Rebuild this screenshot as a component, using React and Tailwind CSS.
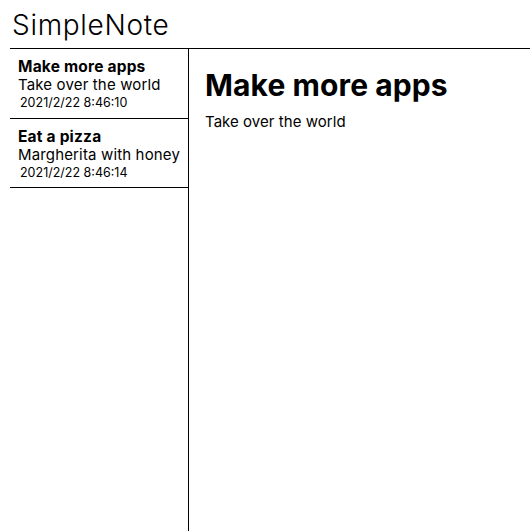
export default function App() {
  const notes = [
    { title: "Make more apps", body: "Take over the world", date: "2021/2/22 8:46:10", h: "h-[70px]" },
    { title: "Eat a pizza", body: "Margherita with honey", date: "2021/2/22 8:46:14", h: "h-[69px]" },
  ];
  return (
    <div className="h-[531px] flex flex-col pl-[10px] text-black bg-white" style={{ fontFamily: "Inter, sans-serif" }}>
      <div className="h-[49px] border-b border-black flex items-center pl-[2px] pt-[2px]">
        <span className="text-[28px] font-light tracking-[0.7px] leading-none">SimpleNote</span>
      </div>
      <div className="flex flex-1 min-h-0">
        <div className="w-[179px] border-r border-black flex flex-col">
          {notes.map((n) => (
            <div key={n.title} className={`border-b border-black pl-[8px] pt-[9px] ${n.h}`}>
              <div className="text-[15.5px] font-bold leading-[18px] tracking-[0.2px]">{n.title}</div>
              <div className="text-[15px] leading-[18px] tracking-[0.15px]">{n.body}</div>
              <div className="text-[12.5px] leading-[18px] pl-[2px]">{n.date}</div>
            </div>
          ))}
        </div>
        <div className="flex-1 pl-[16px] pt-[18px]">
          <h1 className="text-[30px] font-bold leading-[36px] tracking-[0.1px]">Make more apps</h1>
          <p className="text-[15px] leading-[20px] mt-[9px] tracking-[0.05px]">Take over the world</p>
        </div>
      </div>
    </div>
  );
}
